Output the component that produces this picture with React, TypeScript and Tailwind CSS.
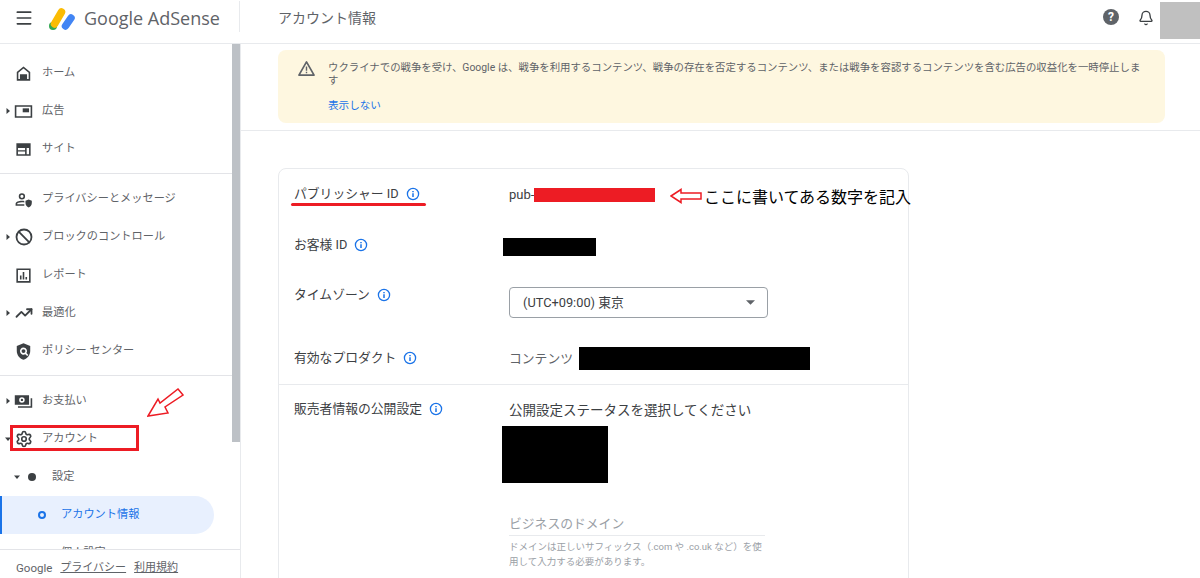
import type { ReactNode } from "react";
import { Menu, Bell, Settings, Ban, TrendingUp } from "lucide-react";

const Caret = ({ open = false }: { open?: boolean }) => (
  <svg viewBox="0 0 6 6" className="w-[6px] h-[6px] text-[#3c4043]" fill="currentColor">
    {open ? <path d="M0 1.500h6L3 5z" /> : <path d="M1.500 0v6L5 3z" />}
  </svg>
);

const Info = () => (
  <svg viewBox="0 0 14 14" className="w-[14px] h-[14px] text-[#1a73e8] shrink-0" fill="none" stroke="currentColor">
    <circle cx="7" cy="7" r="5.600" strokeWidth="1.300" />
    <path d="M7 6.300v3.600M7 4v1.200" strokeWidth="1.500" />
  </svg>
);

const ic = "w-[19px] h-[19px] text-[#3c4043]";

const HomeIcon = () => (
  <svg viewBox="0 0 24 24" className={ic} fill="currentColor">
    <path d="M12 3 3.500 10v11h17V10L12 3zm6.500 16h-2v-6h-9v6h-2v-8l6.500-5.400L18.500 11v8z" />
    <path d="M9 14.500h6V19H9z" />
  </svg>
);
const AdsIcon = () => (
  <svg viewBox="0 0 24 24" className={ic} fill="currentColor">
    <path d="M1 4h22v16H1V4zm2 2v12h18V6H3z" />
    <path d="M11 8h8v5h-8z" />
  </svg>
);
const SiteIcon = () => (
  <svg viewBox="0 0 24 24" className={ic} fill="currentColor">
    <path d="M3 4h18v16H3V4zm2 6v8h9v-3.500H5V13h9v-3H5zm11 0v8h3v-8h-3z" />
  </svg>
);
const PrivacyIcon = () => (
  <svg viewBox="0 0 24 24" className={ic} fill="currentColor">
    <path d="M10 4a4 4 0 1 1 0 8 4 4 0 0 1 0-8zm0 2a2 2 0 1 0 0 4 2 2 0 0 0 0-4z" />
    <path d="M2 20v-2.500C2 15 6 13.500 10 13.500c1 0 2 .1 3 .3v2c-1-.2-2-.3-3-.3-3.500 0-6 1.200-6 2V18h9v2H2z" />
    <path d="M18.500 12l4 1.500v3c0 2.700-1.700 4.800-4 5.500-2.300-.7-4-2.800-4-5.500v-3l4-1.500z" />
  </svg>
);
const ReportIcon = () => (
  <svg viewBox="0 0 24 24" className={ic} fill="currentColor">
    <path d="M3 3h18v18H3V3zm2 2v14h14V5H5z" />
    <path d="M7.500 12h2v5h-2zM11 7.500h2V17h-2zM14.500 14h2v3h-2z" />
  </svg>
);
const PolicyIcon = () => (
  <svg viewBox="0 0 24 24" className={ic} fill="currentColor">
    <path
      fillRule="evenodd"
      d="M12 1.500 20.500 5v6.500c0 5-3.500 9.500-8.500 11-5-1.500-8.500-6-8.500-11V5L12 1.500zM12 7a4.500 4.500 0 1 0 2.300 8.400l2.400 2.400 1.400-1.400-2.400-2.400A4.500 4.500 0 0 0 12 7zm0 2a2.500 2.500 0 1 1 0 5 2.500 2.500 0 0 1 0-5z"
    />
  </svg>
);
const PaymentIcon = () => (
  <svg viewBox="0 0 24 24" className={ic} fill="currentColor">
    <path
      fillRule="evenodd"
      d="M1 4h18v12H1V4zm9 2.500a3.500 3.500 0 1 0 0 7 3.500 3.500 0 0 0 0-7zM10 8.500a1.500 1.500 0 1 1 0 3 1.500 1.500 0 0 1 0-3z"
    />
    <path d="M21 8h2v12H5v-2h16V8z" />
  </svg>
);

type NavRow = { label: string; icon: ReactNode; caret?: boolean; open?: boolean };

const section1: NavRow[] = [
  { label: "ホーム", icon: <HomeIcon /> },
  { label: "広告", icon: <AdsIcon />, caret: true },
  { label: "サイト", icon: <SiteIcon /> },
];
const section2: NavRow[] = [
  { label: "プライバシーとメッセージ", icon: <PrivacyIcon /> },
  { label: "ブロックのコントロール", icon: <Ban size={18} strokeWidth={2.4} className="text-[#3c4043]" />, caret: true },
  { label: "レポート", icon: <ReportIcon /> },
  { label: "最適化", icon: <TrendingUp size={18} strokeWidth={2.4} className="text-[#3c4043]" />, caret: true },
  { label: "ポリシー センター", icon: <PolicyIcon /> },
];
const section3: NavRow[] = [
  { label: "お支払い", icon: <PaymentIcon />, caret: true },
  { label: "アカウント", icon: <Settings size={18} strokeWidth={2.2} className="text-[#3c4043]" />, caret: true, open: true },
];

const NavItem = ({ row }: { row: NavRow }) => (
  <div className="h-[38px] flex items-center shrink-0">
    <div className="w-[14px] pl-[5px] flex items-center">{row.caret && <Caret open={row.open} />}</div>
    <div className="w-[19px] flex items-center justify-center">{row.icon}</div>
    <span className="ml-[9px] text-[11.2px] text-[#5f6368]">{row.label}</span>
  </div>
);

const Sidebar = () => (
  <aside className="relative w-[241px] shrink-0 border-r border-[#e8eaed] flex flex-col h-[534px]">
    <div className="flex-1 overflow-hidden">
      <div className="w-[232px] pt-[10px] pb-[5px] border-b border-[#e3e4e8]">
        {section1.map((r) => (
          <NavItem key={r.label} row={r} />
        ))}
      </div>
      <div className="w-[232px] pt-[6px] pb-[5px] border-b border-[#e3e4e8]">
        {section2.map((r) => (
          <NavItem key={r.label} row={r} />
        ))}
      </div>
      <div className="w-[232px] pt-[6px]">
        {section3.map((r) => (
          <NavItem key={r.label} row={r} />
        ))}
        <div className="h-[38px] flex items-center">
          <div className="w-[28px] pl-[14px] flex"><Caret open /></div>
          <div className="w-[8px] h-[8px] rounded-full bg-[#3c4043]" />
          <span className="ml-[16px] text-[11.2px] text-[#5f6368]">設定</span>
        </div>
        <div className="h-[38px] w-[214px] flex items-center bg-[#e8f0fe] rounded-r-full border-l-2 border-[#1a73e8]">
          <div className="ml-[36px] w-[8px] h-[8px] rounded-full border-2 border-[#1a73e8]" />
          <span className="ml-[15px] text-[11.2px] text-[#1a73e8]">アカウント情報</span>
        </div>
        <div className="h-[38px] flex items-center pl-[61px]">
          <span className="text-[11.2px] text-[#5f6368]">個人設定</span>
        </div>
      </div>
    </div>
    <div className="h-[29px] shrink-0 border-t border-[#e3e4e8] flex items-center pt-[9px] pl-[16px] text-[11px] text-[#5f6368] bg-white">
      <span className="text-[11.5px]">Google</span>
      <span className="ml-[8px] underline">プライバシー</span>
      <span className="ml-[8px] underline">利用規約</span>
    </div>
    {/* scrollbar */}
    <div className="absolute left-[232px] top-0 w-[8px] h-[398px] bg-[#bdc1c6]" />
  </aside>
);

const Label = ({ children }: { children: ReactNode }) => (
  <div className="w-[215px] shrink-0 h-[18px] flex items-center gap-[7px] text-[12.8px] text-[#3c4043]">
    <span>{children}</span>
    <Info />
  </div>
);

const App = () => (
  <div
    className="relative w-[1200px] h-[578px] overflow-hidden bg-white"
    style={{ fontFamily: 'Roboto, "Noto Sans CJK JP", sans-serif' }}
  >
    <header className="h-[44px] border-b border-[#e8eaed] flex items-center">
      <div className="w-[239px] shrink-0 flex items-center">
        <Menu size={20} strokeWidth={2} className="ml-[14px] mb-[7px] text-[#3c4043]" />
        <svg viewBox="0 0 28 24" className="ml-[14px] mb-[5px] w-[28px] h-[24px]">
          <circle cx="5" cy="19" r="4" fill="#34a853" />
          <path d="M6.500 17 13.500 5" stroke="#fbbc04" strokeWidth="7.500" strokeLinecap="round" />
          <path d="M17.500 19 23 11" stroke="#4285f4" strokeWidth="7.500" strokeLinecap="round" />
        </svg>
        <span className="ml-[8px] mb-[6px] text-[18px] text-[#5f6368] whitespace-nowrap" style={{ fontFamily: '"Open Sans", sans-serif' }}>
          Google AdSense
        </span>
      </div>
      <div className="mb-[10px] w-px h-[31px] bg-[#e8eaed]" />
      <span className="ml-[38px] mb-[7px] text-[14px] text-[#5f6368]">アカウント情報</span>
      <div className="ml-auto flex items-start h-full">
        <div className="mt-[9px] mr-[19px] w-[16px] h-[16px] rounded-full bg-[#5f6368] flex items-center justify-center text-white text-[12px] font-bold leading-none">
          ?
        </div>
        <Bell size={16} strokeWidth={2} className="mt-[10px] mr-[6px] text-[#3c4043]" />
        <div className="mt-[2px] w-[40px] h-[37px] bg-[#c0c0c0]" />
      </div>
    </header>

    <div className="flex h-[534px]">
      <Sidebar />
      <main className="flex-1 overflow-hidden">
        <div className="h-[87px] pl-[37px] pr-[35px] pt-[6px] border-b border-[#e8eaed]">
          <div className="h-[73px] bg-[#fef7e0] rounded-lg flex pt-[9px] pl-[19px] pr-[20px]">
            <svg viewBox="0 0 20 18" className="w-[19px] h-[17px] shrink-0 text-[#5f6368] mt-[1px]" fill="none" stroke="currentColor">
              <path d="M10 2 18 16H2z" strokeWidth="1.800" strokeLinejoin="round" />
              <path d="M10 7v4.500M10 12.500v1.500" strokeWidth="1.500" />
            </svg>
            <div className="ml-[12px] text-[10.4px] leading-[13px] text-[#5f6368]">
              <p className="mt-[2px]">
                ウクライナでの戦争を受け、Google は、戦争を利用するコンテンツ、戦争の存在を否定するコンテンツ、または戦争を容認するコンテンツを含む広告の収益化を一時停止しま
                <br />
                す
              </p>
              <p className="mt-[12px] text-[10.6px] text-[#1a73e8]">表示しない</p>
            </div>
          </div>
        </div>

        <div className="ml-[37px] mt-[37px] w-[631px] border border-[#e8eaed] rounded-lg pt-[16px]">
          <div className="h-[51px] flex pl-[15px]">
            <Label>パブリッシャー ID</Label>
            <div className="h-[20px] flex items-center text-[13px] text-[#3c4043]">
              <span>pub-</span>
              <div className="w-[121px] h-[14px] bg-[#ed1c24]" />
            </div>
          </div>
          <div className="h-[50px] flex pl-[15px]">
            <Label>お客様 ID</Label>
            <div className="-ml-[6px] mt-[2px] w-[93px] h-[18px] bg-black" />
          </div>
          <div className="h-[63px] flex pl-[15px]">
            <Label>タイムゾーン</Label>
            <div className="mt-[1px] w-[259px] h-[31px] border border-[#9aa0a6] rounded flex items-center pl-[13px] pr-[12px] text-[12.8px] text-[#3c4043]">
              <span>(UTC+09:00) 東京</span>
              <svg viewBox="0 0 10 5" className="ml-auto w-[9px] h-[5px] text-[#5f6368]" fill="currentColor">
                <path d="M0 0h10L5 5z" />
              </svg>
            </div>
          </div>
          <div className="h-[35px] flex pl-[15px]">
            <Label>有効なプロダクト</Label>
            <div className="flex items-start">
              <span className="h-[20px] leading-[20px] text-[12.8px] text-[#5f6368]">コンテンツ</span>
              <div className="ml-[6px] -mt-[2px] w-[231px] h-[23px] bg-black" />
            </div>
          </div>
          <div className="h-[220px] border-t border-[#e8eaed] flex pl-[15px] pt-[15px]">
            <Label>販売者情報の公開設定</Label>
            <div className="w-[256px]">
              <p className="h-[20px] leading-[20px] text-[13.5px] whitespace-nowrap text-[#3c4043]">公開設定ステータスを選択してください</p>
              <div className="-ml-[7px] mt-[6px] w-[106px] h-[57px] bg-black" />
              <p className="mt-[31px] text-[12.8px] leading-[20px] text-[#9aa0a6]">ビジネスのドメイン</p>
              <div className="mt-[1px] h-[1px] bg-[#e8eaed]" />
              <p className="mt-[3px] text-[9.500px] leading-[15px] text-[#9aa0a6]">
                ドメインは正しいサフィックス（.com や .co.uk など）を使用して入力する必要があります。
              </p>
            </div>
          </div>
        </div>
      </main>
    </div>

    {/* annotations drawn over the screenshot */}
    <div className="absolute left-[10px] top-[425px] w-[129px] h-[26px] border-[3px] border-[#ed1c24]" />
    <svg viewBox="0 0 37 30" className="absolute left-[147px] top-[388px] w-[37px] h-[30px]" fill="white" stroke="#ed1c24" strokeWidth="1.500">
      <path d="M1 28 11 11l2 4L31 1l5 6-18 12 3 6z" />
    </svg>
    <svg viewBox="0 0 32 16" className="absolute left-[670px] top-[188px] w-[32px] h-[16px]" fill="white" stroke="#ed1c24" strokeWidth="1.500">
      <path d="M1 8 11 1.500V5h20v6H11v3.500z" />
    </svg>
    <span className="absolute left-[704px] top-[186px] text-[16px] leading-[24px] text-black whitespace-nowrap">ここに書いてある数字を記入</span>
    <div className="absolute left-[291px] top-[203px] w-[135px] h-[3px] rounded-full bg-[#ed1c24]" />
  </div>
);

export default App;
